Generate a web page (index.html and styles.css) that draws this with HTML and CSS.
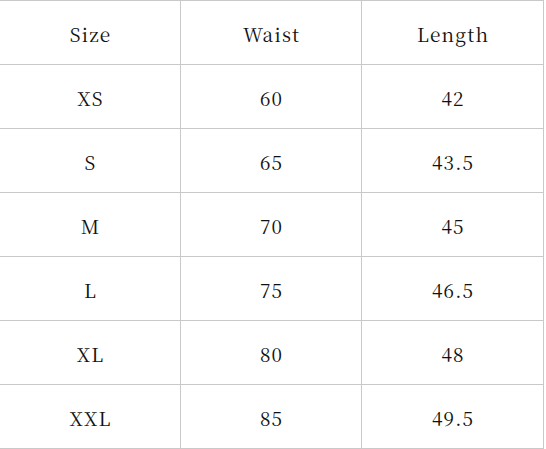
FILE: index.html
```html
<!DOCTYPE html>
<html>
<head>
<meta charset="utf-8">
<link rel="stylesheet" href="styles.css">
</head>
<body>
<div class="size-table">
  <div class="cell">Size</div><div class="cell">Waist</div><div class="cell">Length</div>
  <div class="cell">XS</div><div class="cell">60</div><div class="cell">42</div>
  <div class="cell">S</div><div class="cell">65</div><div class="cell">43.5</div>
  <div class="cell">M</div><div class="cell">70</div><div class="cell">45</div>
  <div class="cell">L</div><div class="cell">75</div><div class="cell">46.5</div>
  <div class="cell">XL</div><div class="cell">80</div><div class="cell">48</div>
  <div class="cell">XXL</div><div class="cell">85</div><div class="cell">49.5</div>
</div>
</body>
</html>
```
FILE: styles.css
```css
html, body {
  margin: 0;
  padding: 0;
  background: #ffffff;
}
.size-table {
  display: grid;
  grid-template-columns: 181px 181px 182px;
  grid-auto-rows: 64px;
  width: 544px;
  border-top: 1px solid #c9c9c9;
  font-family: "Noto Serif CJK SC", "Times New Roman", serif;
  font-size: 19px;
  letter-spacing: 1.2px;
  color: #111111;
}
.cell {
  display: flex;
  align-items: center;
  justify-content: center;
  padding-top: 1px;
  padding-left: 1.2px;
  box-sizing: border-box;
  border-right: 1px solid #c9c9c9;
  border-bottom: 1px solid #c9c9c9;
}
```
